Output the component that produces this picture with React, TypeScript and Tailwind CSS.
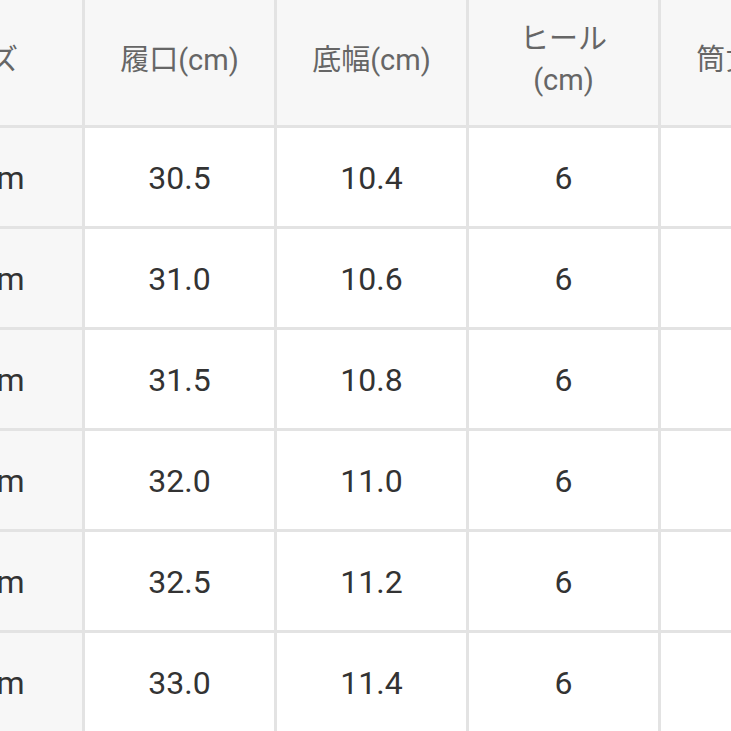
import React from 'react';

interface SizeRow {
  size: string;
  opening: string;
  width: string;
  heel: string;
  shaft: string;
}

const rows: SizeRow[] = [
  { size: '22.5cm', opening: '30.5', width: '10.4', heel: '6', shaft: '38' },
  { size: '23.0cm', opening: '31.0', width: '10.6', heel: '6', shaft: '38' },
  { size: '23.5cm', opening: '31.5', width: '10.8', heel: '6', shaft: '39' },
  { size: '24.0cm', opening: '32.0', width: '11.0', heel: '6', shaft: '39' },
  { size: '24.5cm', opening: '32.5', width: '11.2', heel: '6', shaft: '40' },
  { size: '25.0cm', opening: '33.0', width: '11.4', heel: '6', shaft: '40' },
];

const font = { fontFamily: '"Roboto", "Noto Sans CJK JP", sans-serif' };

const headCell = 'bg-[#f7f7f7] flex items-center justify-center text-center pb-[5px] text-[29px] leading-[41px] text-[#666666]';
const bodyCell = 'bg-white flex items-center justify-center pt-[2px] text-[32px] text-[#333333]';

const App: React.FC = () => {
  return (
    <div className="w-[731px] h-[731px] overflow-hidden bg-white" style={font}>
      <div className="-ml-[132px] w-fit grid grid-cols-[214px_189px_189px_189px_189px] grid-rows-[125px_repeat(6,98px)] gap-[3px] bg-[#e3e3e3]">
        <div className={headCell}>サイズ</div>
        <div className={headCell}>履口(cm)</div>
        <div className={headCell}>底幅(cm)</div>
        <div className={headCell}>
          ヒール
          <br />
          (cm)
        </div>
        <div className={headCell}>筒丈(cm)</div>

        {rows.map(row => (
          <React.Fragment key={row.size}>
            <div className="bg-[#f7f7f7] flex items-center justify-center pt-[2px] pr-[8px] text-[32px] text-[#333333]">{row.size}</div>
            <div className={bodyCell}>{row.opening}</div>
            <div className={bodyCell}>{row.width}</div>
            <div className={bodyCell}>{row.heel}</div>
            <div className={bodyCell}>{row.shaft}</div>
          </React.Fragment>
        ))}
      </div>
    </div>
  );
};

export default App;
